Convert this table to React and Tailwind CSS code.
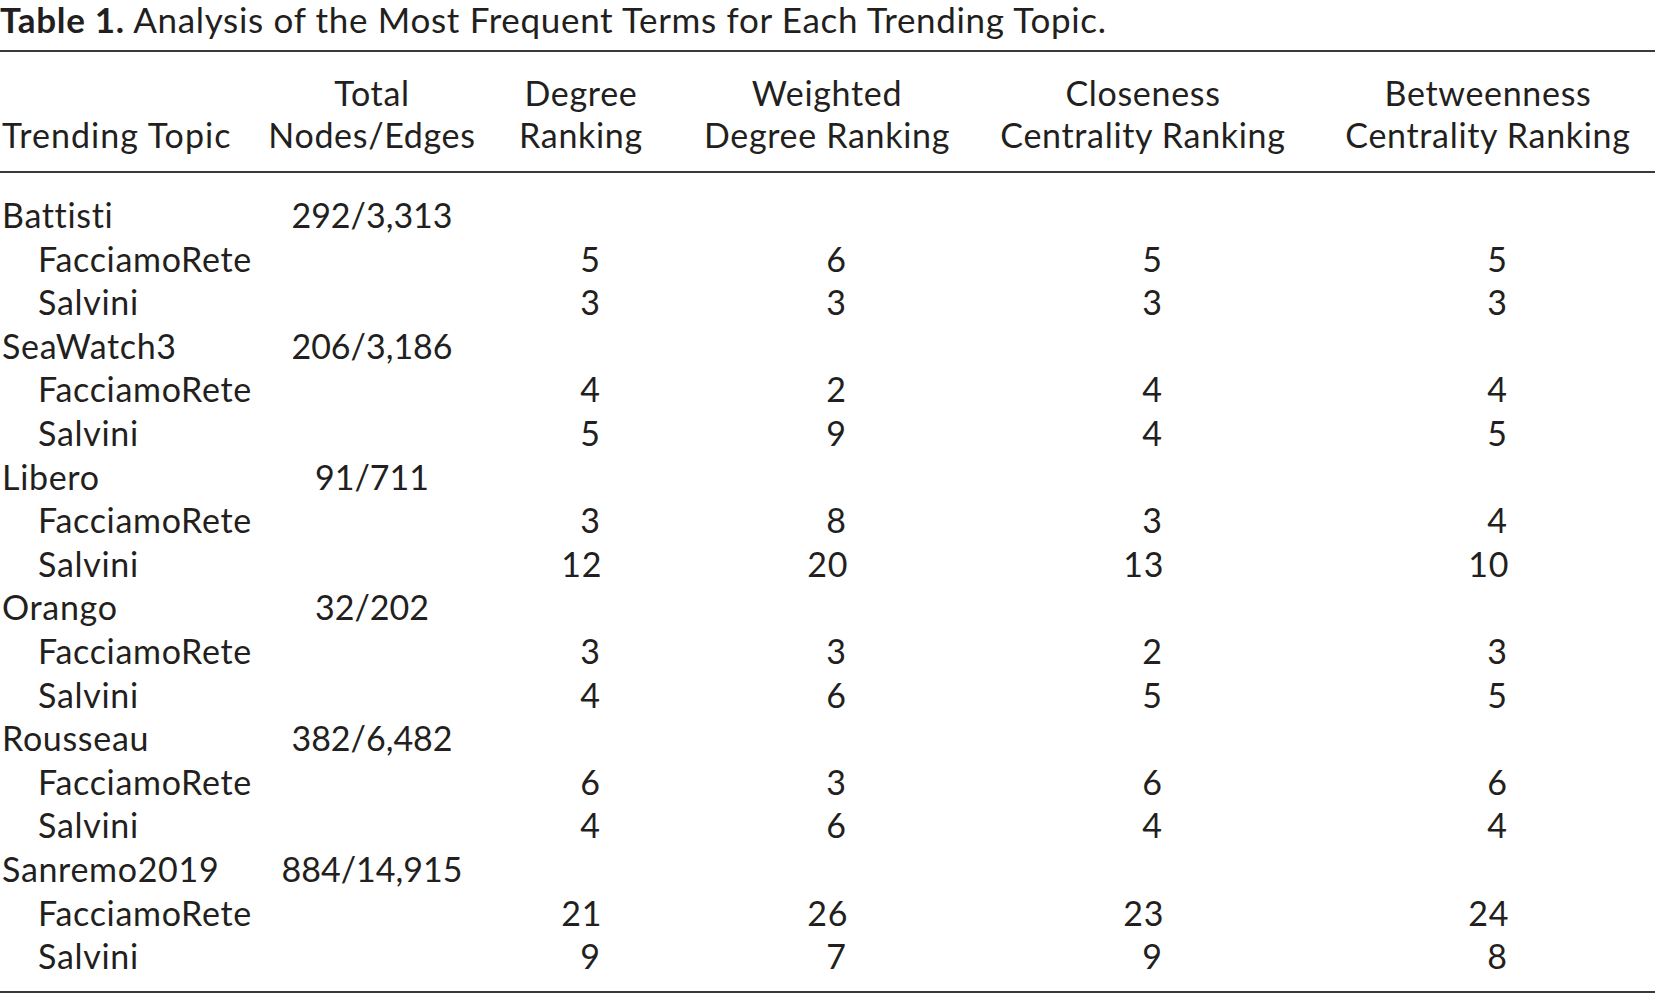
const rows = [
  { topic: "Battisti", total: "292/3,313", terms: [["FacciamoRete", "5", "6", "5", "5"], ["Salvini", "3", "3", "3", "3"]] },
  { topic: "SeaWatch3", total: "206/3,186", terms: [["FacciamoRete", "4", "2", "4", "4"], ["Salvini", "5", "9", "4", "5"]] },
  { topic: "Libero", total: "91/711", terms: [["FacciamoRete", "3", "8", "3", "4"], ["Salvini", "12", "20", "13", "10"]] },
  { topic: "Orango", total: "32/202", terms: [["FacciamoRete", "3", "3", "2", "3"], ["Salvini", "4", "6", "5", "5"]] },
  { topic: "Rousseau", total: "382/6,482", terms: [["FacciamoRete", "6", "3", "6", "6"], ["Salvini", "4", "6", "4", "4"]] },
  { topic: "Sanremo2019", total: "884/14,915", terms: [["FacciamoRete", "21", "26", "23", "24"], ["Salvini", "9", "7", "9", "8"]] },
];

const grid = "grid grid-cols-[262px_220px_198px_294px_338px_343px]";

const Rank = ({ value, last }) => (
  <div className={`text-center ${last ? "pl-[9px]" : ""}`}>
    <span className="inline-block w-[2ch] text-right">{value}</span>
  </div>
);

export default function App()
{
  return (
    <div className="w-[1657px] min-h-[994px] bg-white text-[#231f20] font-['Lato',sans-serif] text-[34px] tracking-[0.02em]">
      <p className="h-[38px] leading-[38px] text-[35px] whitespace-nowrap">
        <span className="font-bold">Table 1.</span> Analysis of the Most Frequent Terms for Each Trending Topic.
      </p>

      <div className="mt-[12px] w-[1655px] border-t-[2px] border-b-[2px] border-[#3a3a3a]">
        {/* header */}
        <div className={`${grid} leading-[42px] pt-[20px] pb-[15px] border-b-[2px] border-[#3a3a3a] whitespace-nowrap`}>
          <div className="flex items-end pl-[2px] tracking-[0.03em]">Trending Topic</div>
          <div className="text-center">Total<br />Nodes/Edges</div>
          <div className="text-center">Degree<br />Ranking</div>
          <div className="text-center">Weighted<br />Degree Ranking</div>
          <div className="text-center">Closeness<br />Centrality Ranking</div>
          <div className="text-center pl-[9px]">Betweenness<br />Centrality Ranking</div>
        </div>

        {/* body */}
        <div className="pt-[20px] pb-[13px] leading-[43.6px] whitespace-nowrap">
          {rows.map((r) => (
            <div key={r.topic}>
              <div className={grid}>
                <div className="pl-[2px]">{r.topic}</div>
                <div className="text-center tracking-normal">{r.total}</div>
              </div>
              {r.terms.map((t) => (
                <div key={t[0]} className={grid}>
                  <div className="pl-[38px]">{t[0]}</div>
                  <div />
                  <Rank value={t[1]} />
                  <Rank value={t[2]} />
                  <Rank value={t[3]} />
                  <Rank value={t[4]} last />
                </div>
              ))}
            </div>
          ))}
        </div>
      </div>
    </div>
  );
}
